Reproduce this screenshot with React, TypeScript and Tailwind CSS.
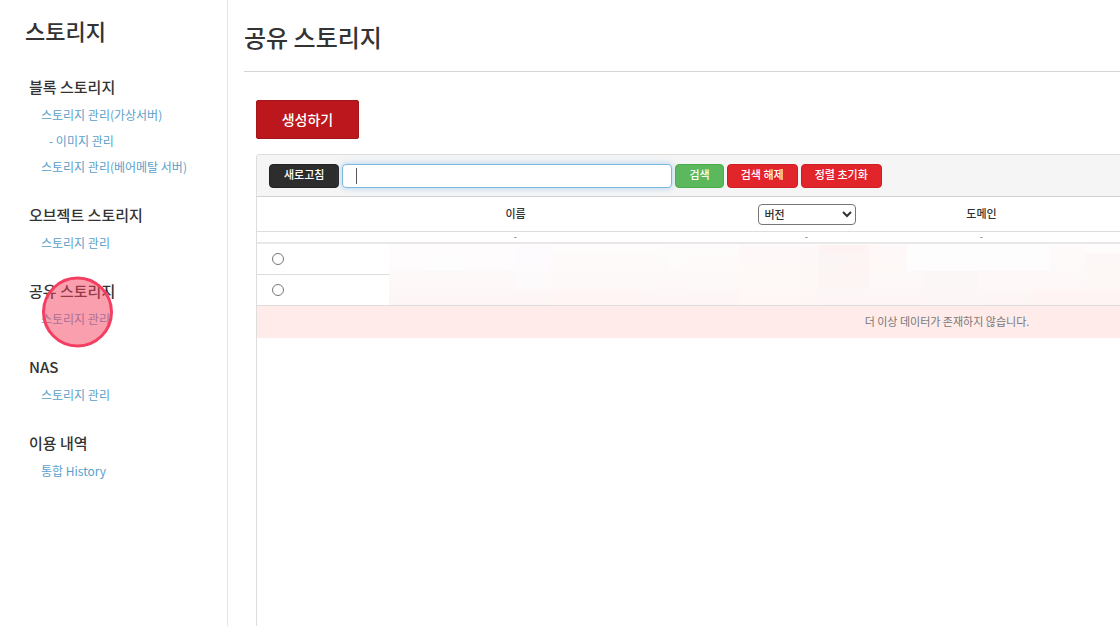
import React from "react";

type MenuLink = {
  label: string
  indent?: boolean
  active?: boolean
}

type MenuSection = {
  title: string
  links: MenuLink[]
}

const menu: MenuSection[] = [
  {
    title: "블록 스토리지",
    links: [
      { label: "스토리지 관리(가상서버)" },
      { label: "- 이미지 관리", indent: true },
      { label: "스토리지 관리(베어메탈 서버)" },
    ],
  },
  { title: "오브젝트 스토리지", links: [{ label: "스토리지 관리" }] },
  { title: "공유 스토리지", links: [{ label: "스토리지 관리", active: true }] },
  { title: "NAS", links: [{ label: "스토리지 관리" }] },
  { title: "이용 내역", links: [{ label: "통합 History" }] },
]

// x, y, width, height, fill
const patches: [number, number, number, number, string][] = [
  [0, 0, 160, 26, "#fefcfd"],
  [36, 8, 38, 18, "#fefefe"],
  [126, 0, 36, 44, "#fcfbfc"],
  [162, 10, 107, 34, "#fef9f9"],
  [162, 44, 88, 16, "#fff5f3"],
  [278, 0, 70, 26, "#fdfbfb"],
  [298, 10, 50, 34, "#fefaf9"],
  [350, 0, 60, 60, "#fdf8f7"],
  [410, 0, 20, 60, "#fcf6f5"],
  [430, 0, 50, 8, "#fdefee"],
  [430, 8, 24, 18, "#f9f3f2"],
  [454, 8, 28, 18, "#fcf2f1"],
  [430, 26, 50, 18, "#fcf3f2"],
  [480, 0, 38, 26, "#fdf8f7"],
  [518, 0, 142, 26, "#fefdfd"],
  [536, 26, 54, 34, "#fbf7f6"],
  [590, 26, 88, 18, "#fefaf8"],
  [660, 0, 36, 26, "#fdfafa"],
  [696, 8, 35, 36, "#fcf6f5"],
  [641, 44, 90, 16, "#fdf4f3"],
]

function Sidebar() {
  return (
    <aside className="w-[228px] shrink-0 border-r border-[#e5e5e5] pt-3.5">
      <h2 className="pl-[25px] text-[22px] leading-8 font-medium">스토리지</h2>
      <nav className="mt-[26px] flex flex-col gap-5 pl-[29px]">
        {menu.map((section) => (
          <section key={section.title}>
            <h3 className="text-[15px] leading-[30px] font-medium">{section.title}</h3>
            <ul className="pl-3 text-[12px] leading-[26px]">
              {section.links.map((link) => (
                <li key={link.label} className={link.indent ? "pl-2" : ""}>
                  <span className="relative">
                    <a href="#" className="text-[#5a9fcb]">{link.label}</a>
                    {link.active && (
                      <span className="pointer-events-none absolute top-1/2 left-px size-[71px] -translate-y-[calc(50%+7px)] rounded-full border-3 border-[#f43f62] bg-[#f43f5e]/50" />
                    )}
                  </span>
                </li>
              ))}
            </ul>
          </section>
        ))}
      </nav>
    </aside>
  )
}

function Toolbar() {
  const button = "h-6 rounded border pb-0.5 text-[11px] font-medium text-white"

  return (
    <div className="flex h-[42px] items-center gap-[3px] border-b border-[#d2d2d2] bg-[#f5f5f5] px-3">
      <button type="button" className={`${button} border-[#222] bg-[#2d2d2d] px-3.5`}>새로고침</button>
      <div className="relative">
        <input
          type="text"
          aria-label="검색어"
          className="block h-6 w-[330px] rounded border border-[#7fb8dd] bg-white px-3 text-[12px] shadow-[0_0_6px_rgba(102,175,233,0.5)] outline-none"
        />
        <span className="absolute top-1 left-3.5 h-4 w-px bg-[#555]" />
      </div>
      <button type="button" className={`${button} border-[#4cae4c] bg-[#5cb85c] px-[13px]`}>검색</button>
      <button type="button" className={`${button} border-[#cf1d25] bg-[#e2242b] px-[13px]`}>검색 해제</button>
      <button type="button" className={`${button} border-[#cf1d25] bg-[#e2242b] px-[13px]`}>정렬 초기화</button>
    </div>
  )
}

function StorageTable() {
  return (
    <table className="w-[1380px] table-fixed border-separate border-spacing-0 text-center text-[11px]">
      <colgroup>
        <col className="w-[42px]" />
        <col className="w-[90px]" />
        <col className="w-[343px]" />
        <col className="w-[149px]" />
        <col className="w-[201px]" />
        <col />
      </colgroup>
      <thead>
        <tr className="h-[35px]">
          <th className="border-b border-[#ddd]"></th>
          <th colSpan={2} className="border-b border-[#ddd] pb-0.5 font-medium">이름</th>
          <th className="border-b border-[#ddd]">
            <select aria-label="버전" className="mx-auto block h-[21px] w-[98px] rounded border border-[#767676] bg-white px-0.5 text-[11px] font-medium">
              <option>버전</option>
            </select>
          </th>
          <th className="border-b border-[#ddd] pb-0.5 font-medium">도메인</th>
          <th className="border-b border-[#ddd]"></th>
        </tr>
      </thead>
      <tbody>
        <tr className="h-3 text-[8px] leading-[10px]">
          <td className="border-b-2 border-[#e8e8e8]"></td>
          <td colSpan={2} className="border-b-2 border-[#e8e8e8]">-</td>
          <td className="border-b-2 border-[#e8e8e8]">-</td>
          <td className="border-b-2 border-[#e8e8e8]">-</td>
          <td className="border-b-2 border-[#e8e8e8]"></td>
        </tr>
        <tr className="h-[31px]">
          <td colSpan={2} className="border-b border-[#ddd] pl-[15px]">
            <input type="radio" name="storage" aria-label="스토리지 1" className="block size-3" />
          </td>
          <td colSpan={4} rowSpan={2} className="border-b border-[#ddd] bg-linear-to-b from-[#fefcfc] to-[#fdf5f5]">
            <svg width="731" height="60" className="block" aria-hidden="true">
              {patches.map(([x, y, width, height, fill]) => (
                <rect key={`${x}-${y}`} x={x} y={y} width={width} height={height} fill={fill} opacity="0.7" />
              ))}
            </svg>
          </td>
        </tr>
        <tr className="h-[31px]">
          <td colSpan={2} className="border-b border-[#ddd] pl-[15px]">
            <input type="radio" name="storage" aria-label="스토리지 2" className="block size-3" />
          </td>
        </tr>
        <tr className="h-8">
          <td colSpan={6} className="bg-[#feebea] pb-0.5 text-[#777]">더 이상 데이터가 존재하지 않습니다.</td>
        </tr>
      </tbody>
    </table>
  )
}

export default function App() {
  return (
    <div className="flex min-h-screen overflow-hidden bg-white font-['Noto_Sans_CJK_KR',sans-serif] text-[#333]">
      <Sidebar />
      <main className="flex min-w-0 flex-1 flex-col pl-4">
        <h1 className="border-b border-[#d5d5d5] pt-[19px] pb-4 text-2xl leading-9 font-medium">공유 스토리지</h1>
        <div className="flex flex-1 flex-col pt-7 pl-3">
          <button type="button" className="h-[39px] w-[103px] rounded-xs border border-[#a3161b] bg-[#bb171c] pb-0.5 text-sm font-medium text-white">
            생성하기
          </button>
          <div className="mt-[15px] flex-1 overflow-hidden rounded-tl border-t border-l border-[#ddd]">
            <Toolbar />
            <StorageTable />
          </div>
        </div>
      </main>
    </div>
  )
}
